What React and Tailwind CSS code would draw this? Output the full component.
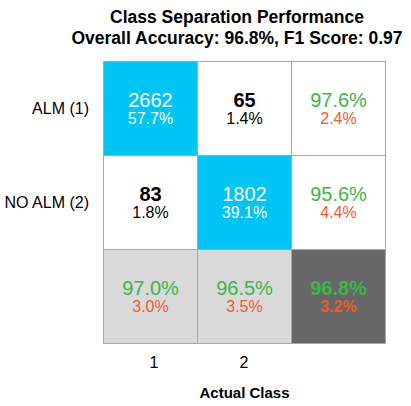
export default function App() {
  const cyan = "bg-[#00c4f4]";
  const Cell = ({ bg, top, bottom, topCls, bottomCls }) => (
    <div className={`${bg} h-[94px] w-[94px] border-r border-b border-[#a8a8a8] flex flex-col items-center justify-center`}>
      <div className={`text-[20px] leading-[20px] ${topCls}`}>{top}</div>
      <div className={`text-[16px] leading-[18px] ${bottomCls}`}>{bottom}</div>
    </div>
  );
  return (
    <div className="w-[411px] h-[406px] bg-white text-black" style={{ fontFamily: '"Liberation Sans", Arial, sans-serif' }}>
      <div className="pl-[63px] pt-[7px] text-center font-bold text-[17.5px] leading-[21px]">
        <div>Class Separation Performance</div>
        <div>Overall Accuracy: 96.8%, F1 Score: 0.97</div>
      </div>
      <div className="flex mt-[12px]">
        <div className="w-[103px] flex flex-col text-[16px] pr-[14px] text-right">
          <div className="h-[94px] flex items-center justify-end pt-[2px]">ALM (1)</div>
          <div className="h-[94px] flex items-center justify-end pt-[2px]">NO ALM (2)</div>
        </div>
        <div className="grid grid-cols-[repeat(3,94px)] border-l border-t border-[#a8a8a8]">
          <Cell bg={cyan} top="2662" bottom="57.7%" topCls="text-white" bottomCls="text-white" />
          <Cell bg="bg-white" top="65" bottom="1.4%" topCls="font-bold text-black" bottomCls="text-black" />
          <Cell bg="bg-white" top="97.6%" bottom="2.4%" topCls="text-[#3db54a]" bottomCls="text-[#f15a29]" />
          <Cell bg="bg-white" top="83" bottom="1.8%" topCls="font-bold text-black" bottomCls="text-black" />
          <Cell bg={cyan} top="1802" bottom="39.1%" topCls="text-white" bottomCls="text-white" />
          <Cell bg="bg-white" top="95.6%" bottom="4.4%" topCls="text-[#3db54a]" bottomCls="text-[#f15a29]" />
          <Cell bg="bg-[#d9d9d9]" top="97.0%" bottom="3.0%" topCls="text-[#3db54a]" bottomCls="text-[#f15a29]" />
          <Cell bg="bg-[#d9d9d9]" top="96.5%" bottom="3.5%" topCls="text-[#3db54a]" bottomCls="text-[#f15a29]" />
          <Cell bg="bg-[#666766]" top="96.8%" bottom="3.2%" topCls="font-bold text-[#3db54a]" bottomCls="font-bold text-[#f15a29]" />
        </div>
      </div>
      <div className="flex ml-[103px] mt-[10px] text-[16px] leading-[17px]">
        <div className="w-[94px] text-center pl-[8px]">1</div>
        <div className="w-[94px] text-center">2</div>
      </div>
      <div className="pl-[103px] w-[386px] mt-[13px] text-center font-bold text-[15px] leading-[17px]">
        Actual Class
      </div>
    </div>
  );
}
